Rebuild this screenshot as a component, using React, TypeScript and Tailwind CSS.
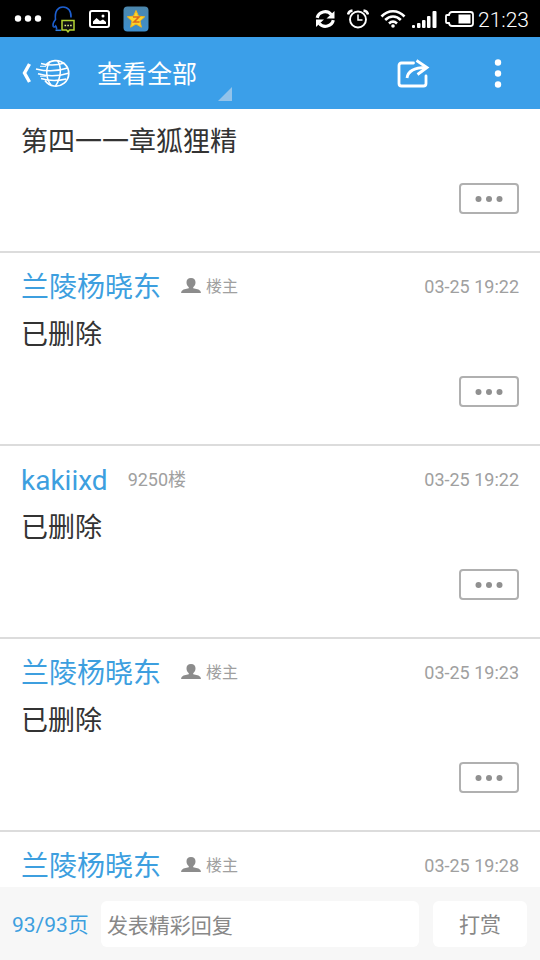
import { Fragment } from "react";

type Post = {
  author?: string;
  owner?: boolean;
  floor?: string;
  time?: string;
  body?: string;
};

const posts: Post[] = [
  { body: "第四一一章狐狸精" },
  { author: "兰陵杨晓东", owner: true, time: "03-25 19:22", body: "已删除" },
  { author: "kakiixd", floor: "9250楼", time: "03-25 19:22", body: "已删除" },
  { author: "兰陵杨晓东", owner: true, time: "03-25 19:23", body: "已删除" },
  { author: "兰陵杨晓东", owner: true, time: "03-25 19:28" },
];

function StatusBar() {
  return (
    <div className="flex h-[37px] shrink-0 items-center justify-between bg-black pl-[14px] pr-[11px] text-white">
      <div className="flex items-center">
        <svg className="h-[7px] w-[28px]" viewBox="0 0 28 7" fill="currentColor">
          <circle cx="4" cy="3.5" r="3.2" />
          <circle cx="14" cy="3.5" r="3.2" />
          <circle cx="24" cy="3.5" r="3.2" />
        </svg>
        <svg className="ml-[9px] h-[28px] w-[26px]" viewBox="0 0 26 28" fill="none">
          <path
            d="M5.500 24.500c.5-1.500-.3-2.500-.8-3.500-1 1.300-2 1.300-2.500.300-.600-2 .5-4.600 2.300-6.800C3.500 6 7 2 12 2s8.500 4 8 10.500"
            stroke="#1d5fd0"
            strokeWidth="1.600"
          />
          <path d="M4.500 25.300h5.500" stroke="#2f7de0" strokeWidth="1.500" />
          <path d="M11 15.500h12v9.500h-4.500l-1.500 1.800-1.500-1.800H11z" fill="#111" stroke="#b4d433" strokeWidth="1.500" />
          <path d="M13.500 20.500h1.600M16.300 20.500h1.600M19.100 20.500h1.600" stroke="#e4f48a" strokeWidth="1.600" />
        </svg>
        <svg className="ml-[12px] h-[18px] w-[21px]" viewBox="0 0 21 18">
          <rect x="1" y="1" width="19" height="16" rx="2" fill="none" stroke="currentColor" strokeWidth="2" />
          <path d="M4 14V11.500L7.500 8l3.500 3 3-1.500 3 2.500v2z" fill="currentColor" />
          <circle cx="14" cy="6" r="1.500" fill="currentColor" />
        </svg>
        <svg className="ml-[13px] h-[26px] w-[26px]" viewBox="0 0 26 26">
          <defs>
            <linearGradient id="tile" x1="0" y1="0" x2="0" y2="1">
              <stop offset="0" stopColor="#4c87ad" />
              <stop offset="1" stopColor="#3d8fce" />
            </linearGradient>
          </defs>
          <rect x="0.500" y="0.500" width="25" height="25" rx="4" fill="url(#tile)" />
          <path
            d="M13 4.500l2.500 5.700 6.200.6-4.700 4.200 1.400 6.200-5.400-3.200-5.400 3.200 1.400-6.200-4.700-4.200 6.200-.6z"
            fill="#fbd52c"
            stroke="#f3b51b"
            strokeLinejoin="round"
          />
          <path d="M10 11h6l-5 5h5.500" fill="none" stroke="#dd6a1c" strokeWidth="1.600" />
        </svg>
      </div>
      <div className="flex items-center">
        <svg className="h-[20px] w-[21px]" viewBox="0 0 21 20" fill="none" stroke="currentColor" strokeWidth="3.200">
          <path d="M2.200 8.800A8 7.600 0 0 1 16.200 5.500" />
          <path d="M18.300 11.200A8 7.600 0 0 1 4.300 14.500" />
          <path d="M19.500 2v7.500H11.500z" fill="currentColor" stroke="none" />
          <path d="M1 18v-7.500h8z" fill="currentColor" stroke="none" />
        </svg>
        <svg className="ml-[11px] h-[20px] w-[22px]" viewBox="0 0 22 20" fill="none" stroke="currentColor">
          <circle cx="11" cy="10.500" r="8" strokeWidth="1.900" />
          <path d="M11 5.500v5.500h4.500" strokeWidth="1.500" />
          <path d="M1 5.500C1.500 3 3 1.800 5.500 1.500M21 5.500c-.5-2.500-2-3.700-4.500-4" strokeWidth="2.400" />
        </svg>
        <svg className="ml-[11px] h-[19px] w-[26px]" viewBox="0 0 26 19" fill="none" stroke="currentColor" strokeWidth="2.600">
          <path d="M1.500 7.500C8 .500 18 .500 24.500 7.500" />
          <path d="M5.200 11c4.500-4.700 11.100-4.700 15.600 0" />
          <path d="M9 14.500c2.500-2.300 5.500-2.300 8 0" />
          <circle cx="13" cy="17" r="1.800" fill="currentColor" stroke="none" />
        </svg>
        <svg className="ml-[6px] h-[18px] w-[25px]" viewBox="0 0 25 18" fill="currentColor">
          <rect x="0" y="15" width="3" height="3" rx="1" />
          <rect x="5" y="13" width="3.500" height="5" rx="1" />
          <rect x="10" y="10" width="3.500" height="8" rx="1" />
          <rect x="15" y="6" width="3.500" height="12" rx="1" />
          <rect x="20.500" y="1" width="4" height="17" rx="1" />
        </svg>
        <svg className="ml-[8px] h-[16px] w-[29px]" viewBox="0 0 29 16">
          <path d="M7 1h18.500Q28 1 28 3.500v9q0 2.500-2.500 2.500H7Q4.500 15 4 12H2Q1 12 1 11V5q0-1 1-1h2Q4.500 1 7 1z" fill="none" stroke="currentColor" strokeWidth="1.800" />
          <rect x="13.500" y="3.500" width="12" height="9" fill="currentColor" />
        </svg>
        <span className="ml-1 pt-[3px] text-[21px] font-light leading-7">21:23</span>
      </div>
    </div>
  );
}

function TopBar() {
  return (
    <header className="flex h-[72px] shrink-0 items-center justify-between bg-[#3b9fe9] pl-[21px] pr-6 text-white">
      <div className="flex h-full items-center">
        <button type="button" aria-label="返回" className="flex items-center">
          <svg className="h-[30px] w-[50px]" viewBox="0 0 50 30" fill="none" stroke="currentColor">
            <path d="M8.500 6L3.500 15l5 9" strokeWidth="3.400" />
            <path d="M24.500 7.500A13 12.800 0 1 1 24 22.500" strokeWidth="1.700" />
            <g strokeWidth="1.500">
              <path d="M20 5.500c8 2.200 16 2 23.500-.5" />
              <path d="M15 11c10 2.500 22 2.300 31.500-1" />
              <path d="M17 15.800c9 2.700 20 2.700 30.300-.5" />
              <path d="M20 20.500c8 2.500 16 2.700 25.300.5" />
              <path d="M29 3.500c-4.500 6-4.500 17 1 23.500" />
              <path d="M36.500 2.500c4.500 7 3.500 17.500-2 25.500" />
            </g>
            <path d="M19 8.300h6M19 18.200h6" strokeWidth="1" />
          </svg>
        </button>
        <button type="button" className="ml-[26px] flex h-full items-center">
          <span className="pt-1 text-[25px] leading-8">查看全部</span>
          <svg className="mb-2 ml-[21px] h-[14px] w-[14px] self-end" viewBox="0 0 14 14">
            <path d="M14 0v14H0z" fill="#93c3ea" />
          </svg>
        </button>
      </div>
      <div className="flex items-center gap-[50px]">
        <button type="button" aria-label="分享">
          <svg className="h-[30px] w-[34px]" viewBox="0 0 34 30" fill="none" stroke="currentColor" strokeWidth="2.800">
            <path d="M17.500 5H5.500Q3 5 3 7.500v18Q3 28 5.500 28h22q2.500 0 2.500-2.500V18" strokeLinecap="round" />
            <path d="M11 20C12 13 18 9.500 30 9.500" />
            <path d="M20.500 2.500L31 9.500 21.500 16.500" />
          </svg>
        </button>
        <button type="button" aria-label="更多">
          <svg className="h-[30px] w-[36px]" viewBox="0 0 36 30" fill="currentColor">
            <circle cx="18" cy="4.500" r="3.200" />
            <circle cx="18" cy="15.500" r="3.200" />
            <circle cx="18" cy="26.500" r="3.200" />
          </svg>
        </button>
      </div>
    </header>
  );
}

function PostItem({ post }: { post: Post }) {
  return (
    <li className="border-b-2 border-[#dcdcdc] px-[21px] pb-[37px] pt-[17px] first:pt-4 last:border-b-0 last:pb-0">
      {post.author && (
        <div className="mb-[14px] flex h-[34px] items-center text-lg text-[#a0a0a0]">
          <a href="#" className="pt-[2px] text-[28px] leading-[34px] text-[#3d9fdf]">
            {post.author}
          </a>
          {post.owner && (
            <Fragment>
              <svg className="mb-1 ml-5 h-[15px] w-[20px]" viewBox="0 0 20 15" fill="#8c8c8c">
                <path d="M10 0c3 0 4.700 2 4.500 4.500 0 2.300-1 3.700-2.300 4.700v1l5.300 1.300Q20 12.500 20 15H0Q0 12.500 2.500 11.500l5.300-1.300v-1c-1.300-1-2.300-2.400-2.300-4.700C5.300 2 7 0 10 0z" />
              </svg>
              <span className="ml-[5px] text-base">楼主</span>
            </Fragment>
          )}
          {post.floor && <span className="ml-5">{post.floor}</span>}
          <time className="ml-auto">{post.time}</time>
        </div>
      )}
      {post.body && (
        <Fragment>
          <p className="text-[27px] leading-[34px] text-[#333]">{post.body}</p>
          <div className="mt-6 flex justify-end">
            <button
              type="button"
              aria-label="更多操作"
              className="flex h-[31px] w-[60px] items-center justify-center rounded border-2 border-[#b0b0b0]"
            >
              <svg className="h-[6px] w-[28px]" viewBox="0 0 28 6" fill="#909090">
                <circle cx="3.500" cy="3" r="3" />
                <circle cx="14" cy="3" r="3" />
                <circle cx="24.500" cy="3" r="3" />
              </svg>
            </button>
          </div>
        </Fragment>
      )}
    </li>
  );
}

function ReplyBar() {
  return (
    <footer className="flex h-[73px] shrink-0 items-center bg-[#f7f7f7] pl-3 pr-[13px] text-[21px]">
      <a href="#" className="pt-1 text-[#3d9fdf]">
        93/93页
      </a>
      <input
        type="text"
        aria-label="发表精彩回复"
        placeholder="发表精彩回复"
        className="ml-3 h-[46px] min-w-0 flex-1 rounded-md bg-white px-[6px] pt-1 placeholder:text-[#888]"
      />
      <button type="button" className="ml-[14px] h-[46px] w-[94px] rounded-md bg-white pt-1 text-[#888]">
        打赏
      </button>
    </footer>
  );
}

export default function App() {
  return (
    <div className="flex h-screen flex-col bg-white font-[Roboto,'Noto_Sans_CJK_SC',sans-serif]">
      <StatusBar />
      <TopBar />
      <main className="min-h-0 flex-1 overflow-hidden">
        <ul>
          {posts.map((post, i) => (
            <PostItem key={i} post={post} />
          ))}
        </ul>
      </main>
      <ReplyBar />
    </div>
  );
}
